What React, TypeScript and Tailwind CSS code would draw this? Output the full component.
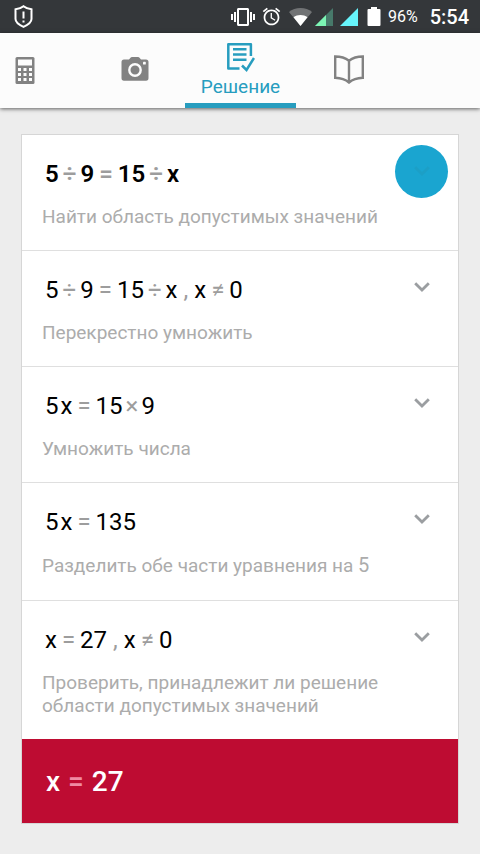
import type { ReactNode } from 'react'

type Step = {
  math: string[]
  text: ReactNode
  active?: boolean
}

const steps: Step[] = [
  { math: ['5', '÷', '9', '=', '15', '÷', 'x'], text: 'Найти область допустимых значений', active: true },
  { math: ['5', '÷', '9', '=', '15', '÷', 'x', ',', 'x', '≠', '0'], text: 'Перекрестно умножить' },
  { math: ['5', 'x', '=', '15', '×', '9'], text: 'Умножить числа' },
  {
    math: ['5', 'x', '=', '135'],
    text: <>Разделить обе части уравнения на <span className="inline-block text-xl leading-[25px]">5</span></>,
  },
  { math: ['x', '=', '27', ',', 'x', '≠', '0'], text: 'Проверить, принадлежит ли решение области допустимых значений' },
]

const operators: Record<string, string> = {
  '÷': 'mx-1',
  '=': 'ml-[5px] mr-[5px]',
  '≠': 'ml-[5px] mr-[5px]',
  '×': 'ml-[3px] mr-[3px]',
  ',': 'ml-[6px] mr-[6px]',
}

const StatusBar = () => {
  return (
    <div className="flex h-[33px] items-center bg-[#34373a] pl-[14px] pr-[11px] text-white">
      <svg width="19" height="23" viewBox="0 0 19 23" fill="none" stroke="currentColor" strokeWidth="2">
        <path d="M9.5 1.3C7.5 3 4.5 4 1.5 4.3V14c0 3.5 4 6 8 7.8 4-1.8 8-4.3 8-7.8V4.3C14.5 4 11.5 3 9.5 1.3z" />
        <path d="M9.5 6.5v7M9.5 15.5v2" />
      </svg>
      <div className="ml-auto flex items-center">
        <svg width="24" height="24" viewBox="0 0 24 24" fill="currentColor">
          <path d="M0 15h2V9H0v6zm3 2h2V7H3v10zm19-8v6h2V9h-2zm-3 8h2V7h-2v10zM16.5 3h-9C6.67 3 6 3.67 6 4.5v15c0 .83.67 1.5 1.5 1.5h9c.83 0 1.5-.67 1.5-1.5v-15c0-.83-.67-1.5-1.5-1.5zM16 19H8V5h8v14z" />
        </svg>
        <svg className="ml-[6px]" width="21" height="21" viewBox="0 0 24 24" fill="currentColor">
          <path d="M22 5.72l-4.6-3.86-1.29 1.53 4.6 3.86L22 5.72zM7.88 3.39L6.6 1.86 2 5.71l1.29 1.53 4.59-3.85zM12.5 8H11v6l4.75 2.85.75-1.23-4-2.37V8zM12 4c-4.97 0-9 4.03-9 9s4.02 9 9 9c4.97 0 9-4.03 9-9s-4.03-9-9-9zm0 16c-3.87 0-7-3.13-7-7s3.13-7 7-7 7 3.13 7 7-3.13 7-7 7z" />
        </svg>
        <svg className="ml-[7px]" width="23" height="18" viewBox="0 0 23 18" fill="currentColor">
          <path opacity="0.3" d="M11.5 18L0 4C3 1.5 7 0 11.5 0S20 1.5 23 4z" />
          <path d="M11.5 18L4.5 9.3C6.5 7.7 9 7 11.5 7s5 .7 7 2.3z" />
        </svg>
        <svg className="ml-[3px]" width="18" height="18" viewBox="0 0 18 18">
          <path d="M18 0v18H0z" fill="#47796a" />
          <path d="M11 7v11H0z" fill="#7df5b4" />
        </svg>
        <svg className="ml-[7px]" width="18" height="18" viewBox="0 0 18 18">
          <path d="M18 0v18H0z" fill="#66f4fb" />
        </svg>
        <svg className="ml-[9px]" width="14" height="19" viewBox="0 0 14 19" fill="currentColor">
          <path d="M4 0h6v2h2.5q1 0 1 1v15q0 1-1 1h-11q-1 0-1-1V3q0-1 1-1H4z" />
        </svg>
        <span className="ml-[7px] text-base">96%</span>
        <span className="ml-3 text-xl font-medium">5:54</span>
      </div>
    </div>
  )
}

const Tabs = () => {
  return (
    <nav className="relative z-10 flex h-[75px] bg-[#fcfcfc] text-[#828282] shadow-[0_1px_4px_rgba(0,0,0,0.6)]">
      <button aria-label="Калькулятор" className="flex w-[85px] shrink-0 items-center pl-[15px]">
        <svg width="20" height="27" viewBox="0 0 20 27">
          <rect x="0.5" width="19" height="27" rx="1.5" fill="currentColor" />
          <g fill="#fcfcfc">
            <rect x="3" y="2.5" width="14" height="6" />
            <path d="M3 11h3v3H3zM8.5 11h3v3h-3zM14 11h3v3h-3zM3 16h3v3H3zM8.5 16h3v3h-3zM14 16h3v3h-3zM3 21h3v3H3zM8.5 21h3v3h-3zM14 21h3v3h-3z" />
          </g>
        </svg>
      </button>
      <button aria-label="Камера" className="flex w-[100px] shrink-0 items-center justify-center pb-1">
        <svg width="28" height="24" viewBox="0 0 28 24">
          <path d="M3 2.5h5L9.5.7Q10 0 11 0h6q1 0 1.5.7L20 2.5h5q2.5 0 2.5 2.5v16q0 2.7-2.5 2.7H3Q.5 23.7.5 21V5Q.5 2.5 3 2.5z" fill="currentColor" />
          <circle cx="14" cy="13" r="5.7" fill="none" stroke="#fcfcfc" strokeWidth="2.4" />
          <rect x="22" y="4.8" width="2.8" height="2.8" rx="0.7" fill="#fcfcfc" />
        </svg>
      </button>
      <button className="flex w-[111px] shrink-0 flex-col items-center border-b-[5px] border-[#279dbf] pt-[10px] text-[19px] leading-6 text-[#279dbf]">
        <svg className="mb-[3px]" width="28" height="29" viewBox="0 0 28 29" fill="none" stroke="currentColor" strokeWidth="2.5">
          <path d="M12.5 25.5H1.3V1.3h22.6V13" strokeLinejoin="round" />
          <path d="M6 6.3h13.5M6 11.5h13.5M6 16.7h13.5" />
          <path d="M15 22.5l4.5 4.5 7.5-12" />
        </svg>
        Решение
      </button>
      <button aria-label="Справочник" className="flex w-[106px] shrink-0 items-center justify-center pb-[3px]">
        <svg width="30" height="29" viewBox="0 0 30 29" fill="none" stroke="currentColor" strokeWidth="2.4">
          <path d="M15 5.7C11.5 3 7 1.5 1.2 1.5v21.3C7 23 11.5 24.5 15 27.5c3.5-3 8-4.5 13.8-4.7V1.5C23 1.5 18.5 3 15 5.7zv21.5" />
        </svg>
      </button>
    </nav>
  )
}

const Equation = ({ tokens }: { tokens: string[] }) => {
  return (
    <>
      {tokens.map((token, i) => {
        const op = operators[token]
        if (op) return <span key={i} className={`${op} text-[#9d9d9d]`}>{token}</span>
        const afterNumber = i > 0 && !operators[tokens[i - 1]]
        return <span key={i} className={afterNumber ? 'ml-[2px]' : ''}>{token}</span>
      })}
    </>
  )
}

const StepRow = ({ math, text, active }: Step) => {
  return (
    <li className="relative border-b border-[#dfdfdf] px-5 pb-[22px] pt-6 last:border-b-0">
      <div className={`flex h-[30px] items-center pl-[3px] text-2xl text-black ${active ? 'font-semibold' : ''}`}>
        <Equation tokens={math} />
      </div>
      <p className="mt-4 max-w-[360px] text-[19px] leading-[23px] text-[#acacac]">{text}</p>
      <button
        aria-label="Показать шаги"
        className={`absolute right-[10px] top-[10px] flex size-[53px] items-center justify-center rounded-full pb-[2px] ${active ? 'bg-[#1aa5d0] text-[#1c9fc6]' : 'text-[#9b9ea1]'}`}
      >
        <svg width="16" height="10" viewBox="0 0 16 10" fill="none" stroke="currentColor" strokeWidth="2.8">
          <path d="M1.2 1.2L8 8l6.8-6.8" />
        </svg>
      </button>
    </li>
  )
}

const App = () => {
  return (
    <div className="min-h-screen bg-[#ededed] font-[Roboto,sans-serif]">
      <StatusBar />
      <Tabs />
      <main className="px-[21px] pb-[30px] pt-[26px]">
        <section className="border border-[#d6d6d6] bg-white">
          <ol>
            {steps.map((step, i) => (
              <StepRow key={i} {...step} />
            ))}
          </ol>
          <div className="flex h-[84px] items-center gap-2 bg-[#be0c32] px-6 pt-[2px] text-[28px] font-medium text-white">
            <span>x</span>
            <span className="text-[#f08ba3]">=</span>
            <span>27</span>
          </div>
        </section>
      </main>
    </div>
  )
}

export default App
